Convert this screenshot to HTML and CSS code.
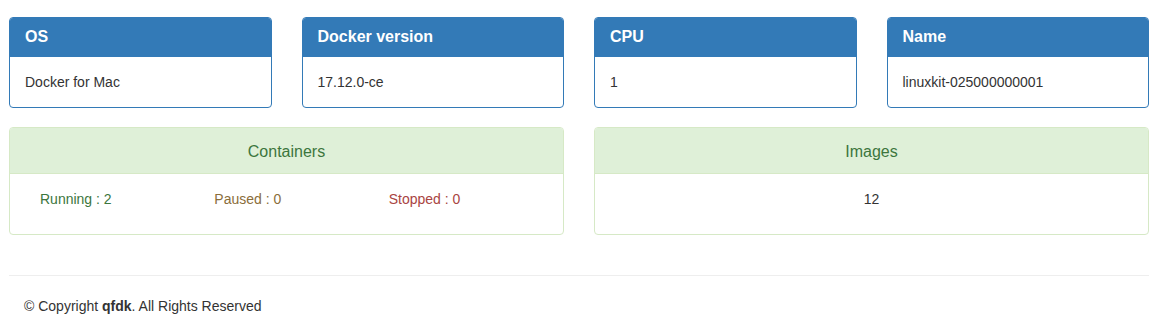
FILE: index.html
```html
<!DOCTYPE html>
<html lang="en">
<head>
    <meta charset="UTF-8">
    <meta name="viewport" content="width=device-width, initial-scale=1.0">
    <title>Docker Dashboard</title>
    <link rel="stylesheet" href="styles.css">
</head>
<body>
    <div class="container">
        <div class="info-row">
            <div class="panel panel-primary">
                <div class="panel-heading">OS</div>
                <div class="panel-body">Docker for Mac</div>
            </div>
            <div class="panel panel-primary">
                <div class="panel-heading">Docker version</div>
                <div class="panel-body">17.12.0-ce</div>
            </div>
            <div class="panel panel-primary">
                <div class="panel-heading">CPU</div>
                <div class="panel-body">1</div>
            </div>
            <div class="panel panel-primary">
                <div class="panel-heading">Name</div>
                <div class="panel-body">linuxkit-025000000001</div>
            </div>
        </div>

        <div class="stats-row">
            <div class="panel panel-success">
                <div class="panel-heading">Containers</div>
                <div class="panel-body states">
                    <span class="text-success">Running : 2</span>
                    <span class="text-warning">Paused : 0</span>
                    <span class="text-danger">Stopped : 0</span>
                </div>
            </div>
            <div class="panel panel-success">
                <div class="panel-heading">Images</div>
                <div class="panel-body centered">12</div>
            </div>
        </div>

        <hr>
        <footer class="footer">
            &copy; Copyright <b>qfdk</b>. All Rights Reserved
        </footer>
    </div>
</body>
</html>
```

FILE: styles.css
```css
body {
    margin: 0;
    font-family: "Liberation Sans", Arial, sans-serif;
    font-size: 14px;
    line-height: 20px;
    color: #333;
    background: #fff;
}
.container {
    width: 1140px;
    margin-left: 9px;
    padding-top: 17px;
}
.info-row {
    display: grid;
    grid-template-columns: repeat(4, 1fr);
    gap: 30px;
    margin-bottom: 19px;
}
.stats-row {
    display: grid;
    grid-template-columns: repeat(2, 1fr);
    gap: 30px;
    margin-bottom: 20px;
}
.panel {
    border: 1px solid transparent;
    border-radius: 4px;
    background: #fff;
}
.panel-heading {
    border-bottom: 1px solid transparent;
    border-radius: 3px 3px 0 0;
}
.panel-primary {
    border-color: #337ab7;
}
.panel-primary .panel-heading {
    background: #337ab7;
    border-color: #337ab7;
    color: #fff;
    font-size: 16px;
    font-weight: bold;
    line-height: 18px;
    padding: 10px 15px;
}
.panel-primary .panel-body {
    padding: 15px;
}
.panel-success {
    border-color: #d6e9c6;
}
.panel-success .panel-heading {
    background: #dff0d8;
    border-color: #d6e9c6;
    color: #3c763d;
    font-size: 16px;
    text-align: center;
    line-height: 20px;
    padding: 14px 15px 11px;
}
.panel-success .panel-body {
    padding: 15px 15px 25px;
}
.states {
    display: grid;
    grid-template-columns: repeat(3, 1fr);
}
.states span {
    padding: 0 15px;
}
.centered {
    text-align: center;
}
.text-success {
    color: #3c763d;
}
.text-warning {
    color: #8a6d3b;
}
.text-danger {
    color: #a94442;
}
hr {
    margin: 40px 0 20px;
    border: 0;
    border-top: 1px solid #eee;
}
.footer {
    padding: 0 15px;
}
```
